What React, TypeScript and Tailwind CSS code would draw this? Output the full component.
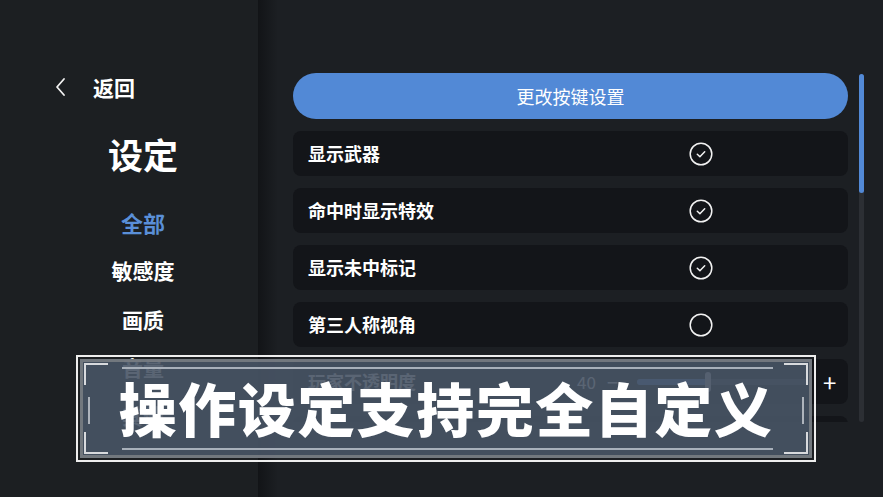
import React from "react";

const font = { fontFamily: '"Noto Sans CJK SC", "Noto Sans", sans-serif' };

function CheckCircle({ checked }: { checked: boolean }) {
  return (
    <svg width="24" height="24" viewBox="0 0 24 24" fill="none">
      <circle cx="12" cy="12" r="10.8" stroke="#f2f2f2" strokeWidth="1.5" />
      {checked && (
        <path d="M8.3 12.2 L10.9 14.7 L15.7 9.8" stroke="#f2f2f2" strokeWidth="1.5" strokeLinecap="round" strokeLinejoin="round" />
      )}
    </svg>
  );
}

function Row({ label, checked }: { label: string; checked: boolean }) {
  return (
    <div className="h-[45px] rounded-[8px] bg-[#131519] flex items-center pl-[15px] shrink-0">
      <span className="text-[18px] font-bold text-white w-[381px]">{label}</span>
      <CheckCircle checked={checked} />
    </div>
  );
}

export default function App() {
  return (
    <div className="w-[883px] h-[497px] overflow-hidden relative flex bg-[#1c1f23]" style={font}>
      {/* Left panel */}
      <div className="w-[258px] h-full bg-[#1c1f22] flex flex-col shrink-0">
        <div className="mt-[75px] h-[24px] flex items-center pl-[54px]">
          <svg width="14" height="20" viewBox="0 0 14 20" fill="none">
            <path d="M10 2 L3 10 L10 18" stroke="#f2f2f2" strokeWidth="1.8" strokeLinecap="round" strokeLinejoin="round" />
          </svg>
          <span className="ml-[25px] text-[21px] font-bold text-white leading-none">返回</span>
        </div>
        <div className="pl-[28px] flex flex-col items-center">
          <div className="mt-[34px] h-[40px] flex items-center text-[35px] font-bold text-white leading-none">设定</div>
          <div className="mt-[24px] h-[50px] flex items-center text-[22px] font-bold text-[#5a8fd8]">全部</div>
          <div className="h-[48px] flex items-center text-[21px] font-bold text-white">敏感度</div>
          <div className="h-[49px] flex items-center text-[21px] font-bold text-white">画质</div>
          <div className="h-[48px] flex items-center text-[21px] font-bold text-white">音量</div>
          <div className="h-[48px] flex items-center text-[21px] font-bold text-white">其他</div>
        </div>
      </div>

      {/* Right area */}
      <div className="flex-1 relative flex h-full">
        <div className="absolute left-0 top-0 h-full w-[20px] bg-gradient-to-r from-[#121417] to-transparent" />
        <div className="ml-[35px] w-[555px] mt-[73px] h-[349px] overflow-hidden flex flex-col gap-[12px]">
          <div className="h-[46px] rounded-full bg-[#5289d6] flex items-center justify-center text-[18px] text-white shrink-0">
            更改按键设置
          </div>
          <div className="flex flex-col gap-[12px]">
            <Row label="显示武器" checked />
            <Row label="命中时显示特效" checked />
            <Row label="显示未中标记" checked />
            <Row label="第三人称视角" checked={false} />
            <div className="h-[45px] rounded-[8px] bg-[#131519] flex items-center pl-[15px] shrink-0">
              <span className="text-[18px] font-bold text-white w-[269px]">玩家不透明度</span>
              <span className="text-[17px] text-white w-[30px]">40</span>
              <span className="text-[20px] text-white w-[30px] leading-none">−</span>
              <div className="relative w-[172px] h-[6px] rounded-full bg-[#3a3f46]">
                <div className="absolute left-0 top-0 h-full w-[70px] rounded-full bg-[#5289d6]" />
                <div className="absolute left-[68px] -top-[7px] w-[6px] h-[20px] rounded-[3px] bg-[#c8ccd2]" />
              </div>
              <span className="ml-[14px] text-[24px] text-white leading-none">+</span>
            </div>
            <div className="h-[45px] rounded-[8px] bg-[#131519] shrink-0" />
          </div>
        </div>
        {/* scrollbar */}
        <div className="ml-[11px] mt-[74px] w-[5px] h-[348px] rounded-full bg-[#2c2f34] relative">
          <div className="absolute left-0 top-0 w-full h-[119px] rounded-full bg-[#5289d6]" />
        </div>
      </div>

      {/* Overlay banner */}
      <div className="absolute left-[76px] top-[355px] w-[740px] h-[107px] border-2 border-[#eeeeee] p-[2px]">
        <div className="relative w-full h-full bg-[rgba(72,84,101,0.9)] border-[3px] border-[rgba(120,124,130,0.9)] flex items-center justify-center">
          {/* corner brackets */}
          <div className="absolute left-[1px] top-[1px] w-[24px] h-[22px] border-l-2 border-t-2 border-[#d8dadd]" />
          <div className="absolute left-[1px] bottom-[1px] w-[24px] h-[22px] border-l-2 border-b-2 border-[#d8dadd]" />
          <div className="absolute right-[1px] top-[1px] w-[24px] h-[22px] border-r-2 border-t-2 border-[#d8dadd]" />
          <div className="absolute right-[1px] bottom-[1px] w-[24px] h-[22px] border-r-2 border-b-2 border-[#d8dadd]" />
          <div className="absolute left-[5px] top-[35px] w-[2px] h-[27px] bg-[#aeb4bc]" />
          <div className="absolute right-[5px] top-[35px] w-[2px] h-[27px] bg-[#aeb4bc]" />
          {/* horizontal lines */}
          <div className="absolute left-[39px] right-[36px] top-[5px] h-[2px] bg-[#a8b0ba]" />
          <div className="absolute left-[39px] right-[36px] bottom-[5px] h-[2px] bg-[#a8b0ba]" />
          <span className="text-[58px] font-black text-white leading-none tracking-[1.5px] -mt-[3px]">
            操作设定支持完全自定义
          </span>
        </div>
      </div>
    </div>
  );
}
